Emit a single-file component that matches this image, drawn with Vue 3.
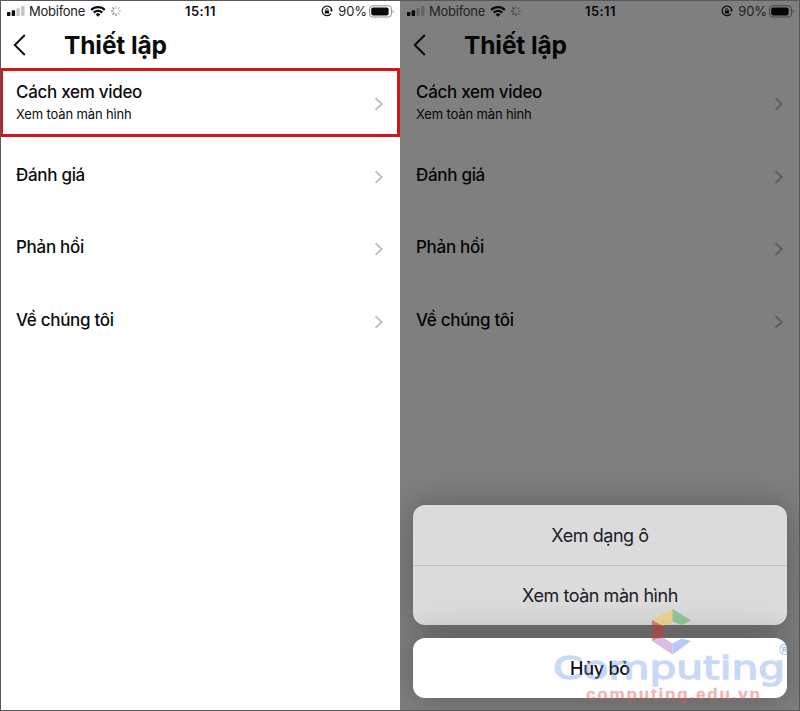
<script setup>
const rows = [
  { title: 'Cách xem video', sub: 'Xem toàn màn hình' },
  { title: 'Đánh giá' },
  { title: 'Phản hồi' },
  { title: 'Về chúng tôi' },
]
const screens = [{ sheet: false }, { sheet: true }]
const spokes = [0, 45, 90, 135, 180, 225, 270, 315]
</script>

<template>
  <main class="board">
    <section v-for="(screen, i) in screens" :key="i" class="phone" :class="{ dimmed: screen.sheet }">
      <header class="status">
        <div class="carrier">
          <svg class="signal" width="18" height="10" viewBox="0 0 18 10">
            <rect x="0" y="6" width="3.4" height="4" rx=".8" />
            <rect x="4.7" y="4.2" width="3.4" height="5.8" rx=".8" />
            <rect class="faint" x="9.4" y="2.2" width="3.4" height="7.8" rx=".8" />
            <rect class="faint" x="14.1" y="0" width="3.4" height="10" rx=".8" />
          </svg>
          <span class="name">Mobifone</span>
          <svg class="wifi" width="16" height="12" viewBox="0 0 16 12">
            <path d="M.4 4.2a10.8 10.8 0 0 1 15.2 0L14 5.8a8.5 8.5 0 0 0-12 0z" />
            <path d="M3 6.8a7.1 7.1 0 0 1 10 0l-1.6 1.6a4.8 4.8 0 0 0-6.8 0z" />
            <path d="M5.6 9.4a3.4 3.4 0 0 1 4.8 0L8 11.8z" />
          </svg>
          <svg class="spinner" width="12" height="12" viewBox="-6 -6 12 12">
            <path
              v-for="(a, k) in spokes" :key="a" d="M0-2.4V-5" :transform="`rotate(${a})`"
              :opacity="k > 3 ? 0.8 : 0.4"
            />
          </svg>
        </div>
        <time class="clock">15:11</time>
        <div class="power">
          <svg class="lock" width="12" height="12" viewBox="0 0 12 12">
            <path class="line" d="M9.9 8.6A4.8 4.8 0 1 1 10.7 5" />
            <path d="M8.9 4.8h3L10.5 7z" />
            <rect x="3.8" y="5.4" width="4.2" height="3.1" rx=".4" />
            <path class="line thin" d="M4.7 5.5v-.8a1.2 1.2 0 0 1 2.4 0v.8" />
          </svg>
          <span class="percent">90%</span>
          <svg class="battery" width="26" height="13" viewBox="0 0 26 13">
            <rect class="shell" x=".6" y=".8" width="21.8" height="11.2" rx="3" />
            <rect x="2.2" y="2.4" width="17.4" height="8" rx="1.8" />
            <path class="cap" d="M23.7 4.7c1.5.7 1.5 2.8 0 3.5z" />
          </svg>
        </div>
      </header>

      <div class="bar">
        <svg class="back" width="13" height="22" viewBox="0 0 13 22">
          <path d="M11.8 1L1.8 11l10 10" />
        </svg>
        <h1>Thiết lập</h1>
      </div>

      <ul class="rows">
        <li v-for="(row, r) in rows" :key="r" :class="{ marked: r === 0 && !screen.sheet }">
          <div class="label">
            <span class="title">{{ row.title }}</span>
            <span v-if="row.sub" class="sub">{{ row.sub }}</span>
          </div>
          <svg class="chevron" width="9" height="14" viewBox="0 0 9 14">
            <path d="M1.5 1.2L7.7 7l-6.2 5.8" />
          </svg>
        </li>
      </ul>

      <div v-if="screen.sheet" class="sheet">
        <div class="options">
          <button>Xem dạng ô</button>
          <button>Xem toàn màn hình</button>
        </div>
        <button class="cancel">Hủy bỏ</button>
      </div>
    </section>

    <svg class="watermark" width="250" height="106" viewBox="0 0 250 106">
      <g class="mark">
        <path fill="#f2cd4c" d="M122.5 4v12.500L113 21l-11-6z" />
        <path fill="#4fb563" d="M122.5 4L141 15.5l-9.5 4.5-9-3.500z" />
        <path fill="#c83b38" d="M102 15l11 6v11.500L102 36z" />
        <path fill="#bd87cf" d="M102 36l11-3.500 9.500 6V49.500z" />
        <path fill="#7f9df2" d="M122.500 38.500l9-5 9.500 2.500-18.500 13.500z" />
      </g>
      <text class="brand" x="3" y="73.500" textLength="232" lengthAdjust="spacingAndGlyphs">Computing</text>
      <text class="reg" x="229" y="50">®</text>
      <text class="site" x="36" y="95" textLength="174">computing.edu.vn</text>
    </svg>
  </main>
</template>

<style>
body {
  margin: 0;
}
</style>

<style scoped>
.board {
  position: relative;
  box-sizing: border-box;
  width: 800px;
  height: 711px;
  display: grid;
  grid-template-columns: 400px 400px;
  overflow: hidden;
  font-family: Inter, "Noto Sans", sans-serif;
  color: #0c0c0e;
}
.board::after {
  content: "";
  position: absolute;
  inset: 0;
  border: 1px solid #58585a;
}
.phone {
  position: relative;
  height: 711px;
  overflow: hidden;
  background: #fff;
}
.phone.dimmed {
  background: #7f7f7f;
  color: #050506;
}
.status {
  display: grid;
  grid-template-columns: 1fr auto 1fr;
  align-items: center;
  height: 22px;
  padding: 0 5px 0 7px;
  font-size: 13px;
  line-height: 22px;
}
.carrier,
.power {
  display: flex;
  align-items: center;
}
.name {
  margin-left: 4px;
  width: 57px;
  letter-spacing: -0.25px;
  white-space: nowrap;
  color: #222;
}
.signal .faint {
  fill: #c4c4c4;
}
.dimmed .signal .faint {
  fill: #626262;
}
.wifi {
  margin-left: 4px;
}
.spinner {
  margin-left: 4px;
}
.spinner path {
  stroke: #555;
  stroke-width: 1.1;
}
.dimmed .spinner path {
  stroke: #222;
}
.clock {
  font-weight: 600;
  font-size: 13px;
  letter-spacing: 0.4px;
  margin-right: 1px;
}
.power {
  justify-content: flex-end;
}
.percent {
  margin: 0 2px 0 5px;
  letter-spacing: -0.1px;
  color: #222;
}
.line {
  fill: none;
  stroke: currentColor;
  stroke-width: 1.2;
}
.line.thin {
  stroke-width: 0.8;
}
.shell {
  fill: none;
  stroke: #8e8e8e;
  stroke-width: 1;
}
.cap {
  fill: #999;
}
.dimmed .shell {
  stroke: #444;
}
.dimmed .cap {
  fill: #444;
}
.bar {
  display: flex;
  align-items: center;
  height: 46px;
  padding-left: 13px;
}
.back path {
  fill: none;
  stroke: currentColor;
  stroke-width: 1.9;
}
h1 {
  margin: 0 0 0 38px;
  font-size: 24.5px;
  font-weight: 700;
  letter-spacing: -0.12px;
  line-height: 30px;
}
.rows {
  margin: 0;
  padding: 0;
  list-style: none;
}
.rows li {
  position: relative;
  box-sizing: border-box;
  display: flex;
  align-items: center;
  justify-content: space-between;
  height: 72.5px;
  padding: 0 17px 0 16px;
}
.marked::after {
  content: "";
  position: absolute;
  inset: 0 0 3.5px;
  border: 3px solid #d0161b;
}
.label {
  display: flex;
  flex-direction: column;
  padding-bottom: 4px;
}
.title {
  font-size: 17px;
  font-weight: 500;
  line-height: 24px;
  letter-spacing: -0.3px;
}
.sub {
  font-size: 13px;
  line-height: 20px;
  letter-spacing: -0.14px;
}
.chevron path {
  fill: none;
  stroke: #bdbdbf;
  stroke-width: 1.8;
}
.dimmed .chevron path {
  stroke: #5c5c5d;
}
.sheet {
  position: absolute;
  left: 13px;
  right: 13px;
  bottom: 13px;
  display: flex;
  flex-direction: column;
  gap: 13px;
}
.options,
.cancel {
  border-radius: 12px;
  box-shadow: 0 0 36px rgba(0, 0, 0, 0.28);
}
.options {
  background: #dbdbdc;
}
.sheet button {
  display: block;
  width: 100%;
  height: 60px;
  padding: 0;
  border: 0;
  background: none;
  font: 400 18px/61px Inter, "Noto Sans", sans-serif;
  letter-spacing: -0.45px;
  color: #1d1b26;
  text-align: center;
}
.options button + button {
  border-top: 1px solid #bebebf;
  line-height: 59px;
}
.sheet .cancel {
  background: #fff;
  color: #0b0b10;
  font-weight: 500;
  letter-spacing: -0.25px;
}
.watermark {
  position: absolute;
  left: 550px;
  top: 605px;
  overflow: visible;
}
.mark {
  opacity: 0.55;
}
.brand {
  font: 400 32px "DejaVu Sans", sans-serif;
  fill: #6f9ce6;
  stroke: #6f9ce6;
  stroke-width: 1.4;
  stroke-linejoin: round;
  opacity: 0.38;
}
.reg {
  font: 700 15px "Liberation Sans", sans-serif;
  fill: #557fc4;
  opacity: 0.5;
}
.site {
  font: 700 17px "Liberation Sans", sans-serif;
  fill: #dc5a5a;
  stroke: #dc5a5a;
  stroke-width: 0.4;
  opacity: 0.45;
}
svg {
  flex: none;
  fill: currentColor;
}
</style>
